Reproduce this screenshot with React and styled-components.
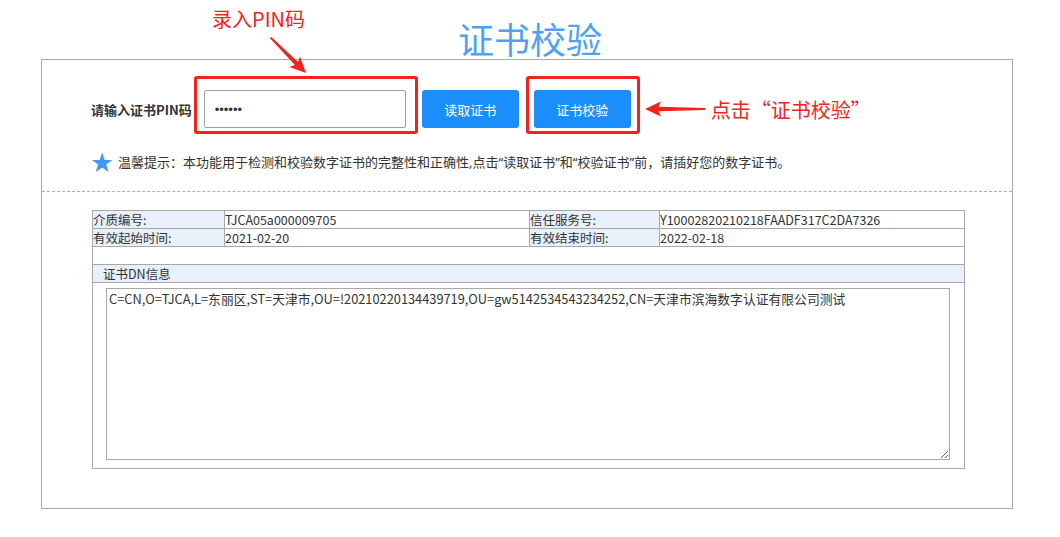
import React from "react";
import styled, { createGlobalStyle } from "styled-components";

const GlobalStyle = createGlobalStyle`
	body {
		margin: 0;
		background: #fff;
		font-family: "Noto Sans CJK SC", "Liberation Sans", sans-serif;
		color: #333;
	}
`

const RED = '#f5221b'
const BLUE = '#1a8ffb'

const Page = styled.div`
	position: relative;
	width: 1060px;
	height: 537px;
`

const Title = styled.h1`
	box-sizing: border-box;
	height: 59px;
	margin: 0;
	padding-top: 13px;
	font-size: 36px;
	font-weight: normal;
	line-height: 50px;
	text-align: center;
	color: #4fa2f3;
`

const Panel = styled.div`
	margin-left: 41px;
	width: 970px;
	height: 448px;
	border: 1px solid #a8a8a8;
`

const TopSection = styled.div`
	padding: 30px 0 0 49px;
	height: 132px;
	box-sizing: border-box;
	border-bottom: 1px dashed #b0b0b0;
`

const FormRow = styled.div`
	display: flex;
	align-items: center;
	height: 38px;
`

const Label = styled.label`
	font-size: 13px;
	font-weight: bold;
	color: #333;
	margin-right: 12px;
	white-space: nowrap;
`

const Marked = styled.div`
	position: relative;
	display: flex;
	margin-left: ${p => p.$gap || 0}px;
	&::after {
		content: "";
		position: absolute;
		top: ${p => p.$top}px;
		left: ${p => p.$left}px;
		right: ${p => p.$right}px;
		bottom: ${p => p.$bottom}px;
		border: 3px solid ${RED};
		border-radius: 3px;
		pointer-events: none;
	}
`

const PinInput = styled.input`
	box-sizing: border-box;
	width: 202px;
	height: 38px;
	padding: 0 10px;
	border: 1px solid #a0a0a0;
	border-radius: 2px;
	font-size: 13px;
	color: #333;
	outline: none;
`

const Button = styled.button`
	width: 97px;
	height: 38px;
	margin-left: ${p => p.$gap || 0}px;
	border: none;
	border-radius: 3px;
	background: ${BLUE};
	color: #fff;
	font-family: inherit;
	font-size: 13px;
	cursor: pointer;
`

const ArrowSvg = styled.svg`
	display: block;
	margin-left: ${p => p.$gap || 0}px;
`

const RedNote = styled.span`
	font-size: 20px;
	color: ${RED};
	white-space: nowrap;
	margin-left: ${p => p.$gap || 0}px;
`

const TopNote = styled.div`
	position: absolute;
	top: 4px;
	left: 212px;
	line-height: 30px;
`

const DownArrow = styled.svg`
	position: absolute;
	left: 262px;
	top: 30px;
`

const Hint = styled.div`
	display: flex;
	align-items: center;
	margin-top: 23px;
	height: 20px;
	font-family: "Noto Sans", "Noto Sans CJK SC", sans-serif;
	font-size: 13px;
	color: #333;
`

const Star = styled.span`
	font-size: 22px;
	line-height: 20px;
	color: #3f97f6;
	margin: 0 5px 0 0;
`

const TableSection = styled.div`
	padding: 18px 0 0 50px;
`

const InfoTable = styled.table`
	width: 873px;
	border-collapse: collapse;
	font-size: 12.5px;
	color: #333;
	td {
		border: 1px solid #a8a8a8;
		height: 17px;
		padding: 0;
		line-height: 17px;
		white-space: nowrap;
	}
`

const KeyCell = styled.td`
	background: #e8f0fc;
	width: ${p => p.$w}px;
`

const ValueCell = styled.td`
	width: ${p => p.$w}px;
`

const HeadCell = styled.td`
	background: #e8f0fc;
	&& { padding-left: 10px; }
`

const AreaCell = styled.td`
	&& {
		height: auto;
		padding: 5px 14px 8px 13px;
		vertical-align: top;
	}
`

const DnArea = styled.textarea`
	display: block;
	box-sizing: border-box;
	width: 100%;
	height: 172px;
	padding: 1px 2px;
	border: 1px solid #a8a8a8;
	font-family: inherit;
	font-size: 12.8px;
	line-height: 17px;
	color: #333;
	outline: none;
`

const Arrow = ({ length, angle, x, y }) => (
	<g transform={`translate(${x},${y}) rotate(${angle})`}>
		<polygon
			fill={RED}
			points={`0,0 16,-7.5 13.5,-2.2 ${length},-1 ${length},1 13.5,2.2 16,7.5`}
		/>
	</g>
)

const dn = 'C=CN,O=TJCA,L=东丽区,ST=天津市,OU=!20210220134439719,OU=gw5142534543234252,CN=天津市滨海数字认证有限公司测试'

export default function App() {
	const [pin, setPin] = React.useState('123456')
	return (
		<Page>
			<GlobalStyle />
			<Title>证书校验</Title>
			<TopNote><RedNote>录入PIN码</RedNote></TopNote>
			<DownArrow width="50" height="50" viewBox="0 0 50 50">
				<Arrow length={50} angle={225} x={44} y={43} />
			</DownArrow>
			<Panel>
				<TopSection>
					<FormRow>
						<Label>请输入证书PIN码</Label>
						<Marked $top={-14} $left={-10} $right={-12} $bottom={-6}>
							<PinInput type="password" value={pin} onChange={e => setPin(e.target.value)} />
						</Marked>
						<Button $gap={16}>读取证书</Button>
						<Marked $gap={15} $top={-14} $left={-8} $right={-9} $bottom={-6}>
							<Button>证书校验</Button>
						</Marked>
						<ArrowSvg $gap={13} width="62" height="18" viewBox="0 0 62 18">
							<Arrow length={60} angle={0} x={1} y={9} />
						</ArrowSvg>
						<RedNote $gap={5}>点击“证书校验”</RedNote>
					</FormRow>
					<Hint>
						<Star>★</Star>
						温馨提示：本功能用于检测和校验数字证书的完整性和正确性,点击“读取证书”和“校验证书”前，请插好您的数字证书。
					</Hint>
				</TopSection>
				<TableSection>
					<InfoTable>
						<tbody>
							<tr>
								<KeyCell $w={131}>介质编号:</KeyCell>
								<ValueCell $w={304}>TJCA05a000009705</ValueCell>
								<KeyCell $w={129}>信任服务号:</KeyCell>
								<ValueCell>Y10002820210218FAADF317C2DA7326</ValueCell>
							</tr>
							<tr>
								<KeyCell>有效起始时间:</KeyCell>
								<ValueCell>2021-02-20</ValueCell>
								<KeyCell>有效结束时间:</KeyCell>
								<ValueCell>2022-02-18</ValueCell>
							</tr>
							<tr>
								<td colSpan={4}></td>
							</tr>
							<tr>
								<HeadCell colSpan={4}>证书DN信息</HeadCell>
							</tr>
							<tr>
								<AreaCell colSpan={4}>
									<DnArea readOnly value={dn} />
								</AreaCell>
							</tr>
						</tbody>
					</InfoTable>
				</TableSection>
			</Panel>
		</Page>
	)
}
